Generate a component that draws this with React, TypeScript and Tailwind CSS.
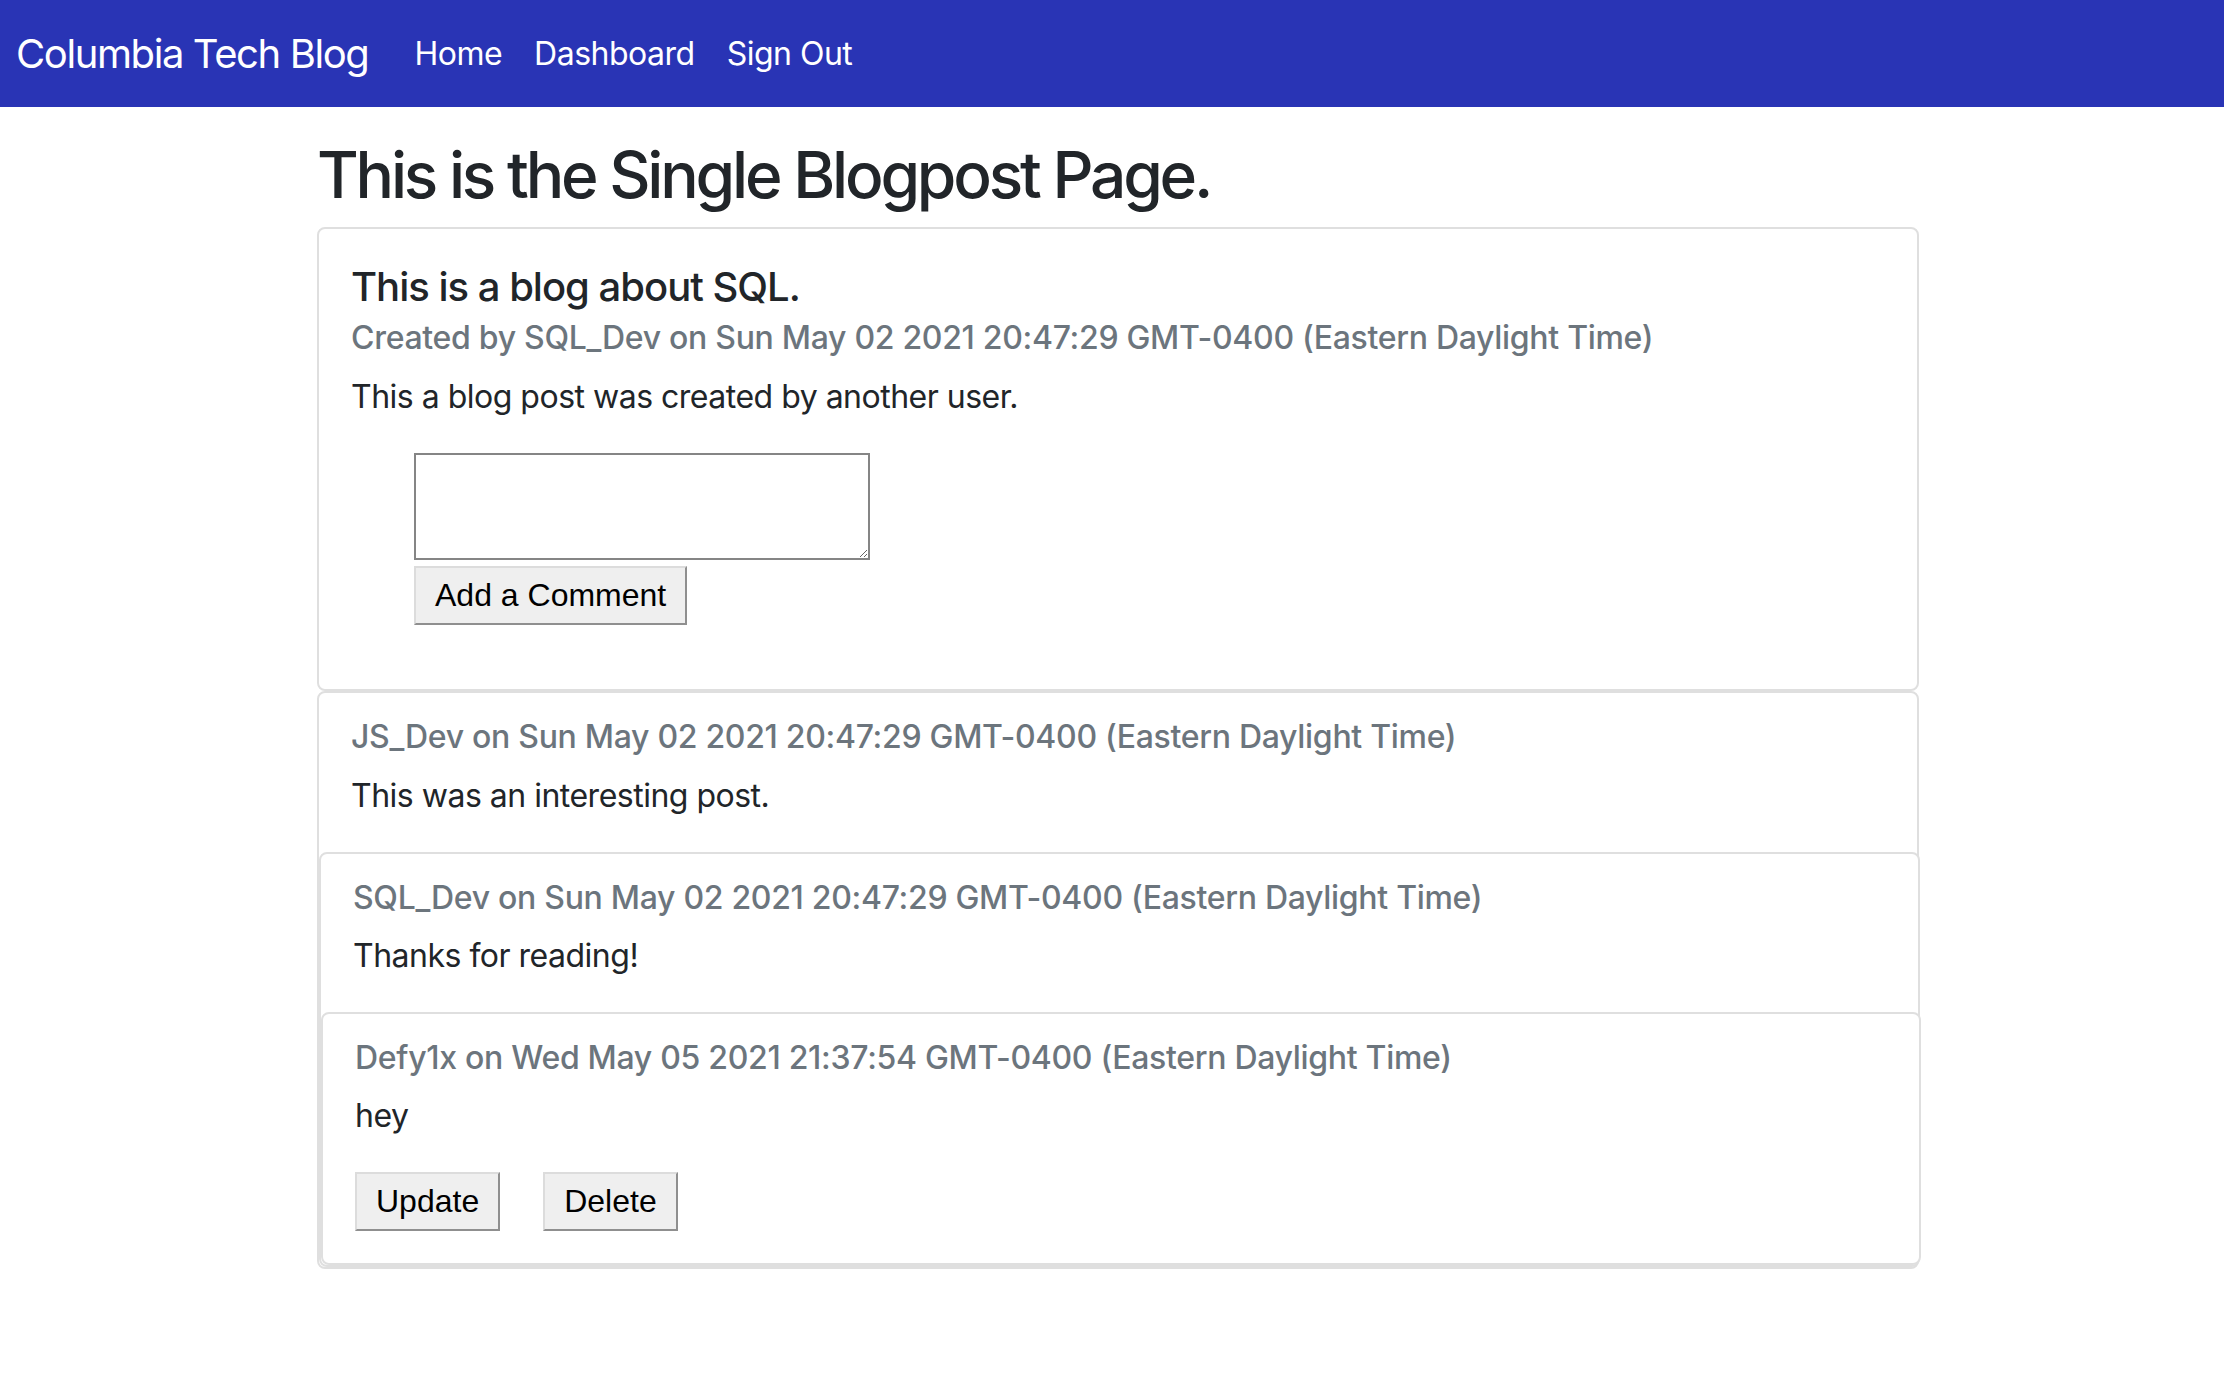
import React from 'react';

type BlogComment = {
  author: string;
  date: string;
  text: string;
  own?: boolean;
};

const comments: BlogComment[] = [
  { author: 'JS_Dev', date: 'Sun May 02 2021 20:47:29 GMT-0400 (Eastern Daylight Time)', text: 'This was an interesting post.' },
  { author: 'SQL_Dev', date: 'Sun May 02 2021 20:47:29 GMT-0400 (Eastern Daylight Time)', text: 'Thanks for reading!' },
  { author: 'Defy1x', date: 'Wed May 05 2021 21:37:54 GMT-0400 (Eastern Daylight Time)', text: 'hey', own: true },
];

const btn =
  "bg-[#efefef] text-black font-['Liberation_Sans',Arial,sans-serif] text-[32px] leading-[37px] px-[19px] py-[9px] border-2 border-t-[#dcdcdc] border-l-[#dcdcdc] border-r-[#8f8f8f] border-b-[#8f8f8f]";

const CommentCard: React.FC<{ list: BlogComment[] }> = ({ list }) => {
  const [c, ...rest] = list;
  if (!c) return null;
  return (
    <div className="flex flex-col bg-white border-2 border-[#dfdfdf] rounded-[8px]">
      <div className="p-[32px]">
        <h6 className="-mt-[7px] mb-[15px] text-[32px] leading-[1.2] font-medium tracking-[-0.3px] text-[#6c757d]">
          {c.author} on {c.date}
        </h6>
        <p className={`text-[32px] leading-[1.5] tracking-[-0.5px] ${c.own ? 'mb-[32px]' : 'mb-0'}`}>{c.text}</p>
        {c.own && (
          <div className="flex gap-[43px]">
            <button className={btn}>Update</button>
            <button className={btn}>Delete</button>
          </div>
        )}
      </div>
      {rest.length > 0 && (
        <div className="-mr-[3px]">
          <CommentCard list={rest} />
        </div>
      )}
    </div>
  );
};

const App: React.FC = () => {
  return (
    <div className="min-h-screen bg-white text-[#212529] font-['Inter',sans-serif]">
      <nav className="h-[107px] bg-[#2934b5] flex items-center px-[16px] text-white">
        <a href="/" className="text-[40px] leading-[60px] tracking-[-1.4px] mr-[30px] pt-[1px]">
          Columbia Tech Blog
        </a>
        <ul className="flex text-[32px] leading-[48px] tracking-[-0.5px] pt-[1px]">
          <li><a href="/" className="px-[16px]">Home</a></li>
          <li><a href="/dashboard" className="px-[16px]">Dashboard</a></li>
          <li><a href="/logout" className="px-[16px]">Sign Out</a></li>
        </ul>
      </nav>

      <main className="ml-[317px] w-[1602px] pt-[30px] pb-[100px]">
        <h1 className="text-[64px] leading-[1.2] font-medium tracking-[-3.2px] mb-[13px]">This is the Single Blogpost Page.</h1>

        <div className="bg-white border-2 border-[#dfdfdf] rounded-[8px]">
          <div className="p-[32px]">
            <h5 className="text-[40px] leading-[1.2] font-medium tracking-[-1px] mt-[2px] mb-[14px]">This is a blog about SQL.</h5>
            <h6 className="-mt-[6px] mb-[16px] text-[32px] leading-[1.2] font-medium tracking-[-0.3px] text-[#6c757d]">
              Created by SQL_Dev on Sun May 02 2021 20:47:29 GMT-0400 (Eastern Daylight Time)
            </h6>
            <p className="text-[32px] leading-[1.5] tracking-[-0.5px] mb-[32px]">This a blog post was created by another user.</p>
            <form className="ml-[63px] mb-[32px]" onSubmit={(e) => e.preventDefault()}>
              <textarea className="block w-[456px] h-[107px] border-2 border-[#858585] resize bg-white" />
              <button type="submit" className={`${btn} mt-[6px]`}>Add a Comment</button>
            </form>
          </div>
        </div>

        <CommentCard list={comments} />
      </main>
    </div>
  );
};

export default App;
